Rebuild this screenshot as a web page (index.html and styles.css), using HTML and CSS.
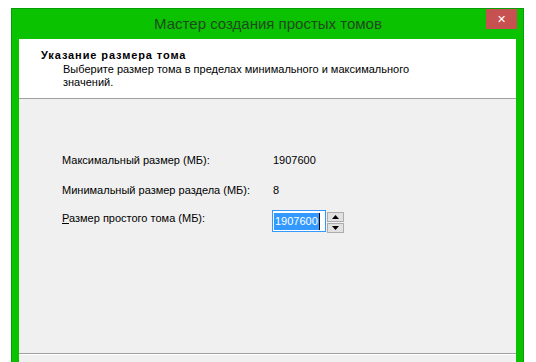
FILE: index.html
```html
<!DOCTYPE html>
<html lang="ru">
<head>
<meta charset="utf-8">
<title>Мастер создания простых томов</title>
<link rel="stylesheet" href="styles.css">
</head>
<body>
<div class="window">
  <div class="titlebar">
    <span class="title">Мастер создания простых томов</span>
    <div class="close">&#x2715;</div>
  </div>
  <div class="client">
    <div class="header">
      <div class="h-title">Указание размера тома</div>
      <div class="h-sub">Выберите размер тома в пределах минимального и максимального<br>значений.</div>
    </div>
    <div class="main">
      <div class="row r1">
        <span class="label">Максимальный размер (МБ):</span>
        <span class="value">1907600</span>
      </div>
      <div class="row r2">
        <span class="label">Минимальный размер раздела (МБ):</span>
        <span class="value">8</span>
      </div>
      <div class="row r3">
        <span class="label"><u>Р</u>азмер простого тома (МБ):</span>
        <div class="spin">
          <div class="edit"><span class="sel">1907600</span><span class="caret"></span></div>
          <div class="btns">
            <div class="btn"><svg width="7" height="4" viewBox="0 0 7 4"><path d="M0 4 L7 4 L3.5 0 Z" fill="#000"/></svg></div>
            <div class="btn"><svg width="7" height="4" viewBox="0 0 7 4"><path d="M0 0 L7 0 L3.5 4 Z" fill="#000"/></svg></div>
          </div>
        </div>
      </div>
    </div>
    <div class="footer"></div>
  </div>
</div>
</body>
</html>
```
FILE: styles.css
```css
html, body {
  margin: 0;
  padding: 0;
  background: #ffffff;
  height: 362px;
  overflow: hidden;
}
body {
  font-family: "Liberation Sans", Arial, sans-serif;
  font-size: 11px;
  color: #000;
}
.window {
  margin: 8px 0 0 11px;
  width: 497px;
  border: 1px solid #089c08;
  border-bottom: none;
  background: #0bc200;
  padding: 0 7px;
  height: 353px;
  position: relative;
}
.titlebar {
  height: 30px;
  display: flex;
  justify-content: center;
  align-items: center;
}
.title {
  font-size: 15px;
  line-height: 30px;
  color: #1f4a20;
  padding-left: 1px;
}
.close {
  position: absolute;
  top: 0;
  right: 6px;
  width: 31px;
  height: 20px;
  background: #c75050;
  color: #fff;
  font-family: "DejaVu Sans", sans-serif;
  font-size: 11px;
  font-weight: bold;
  display: flex;
  align-items: center;
  justify-content: center;
}
.client {
  background: #f0f0f0;
  height: 323px;
}
.header {
  background: #ffffff;
  border-bottom: 1px solid #a0a0a0;
  box-sizing: border-box;
  height: 60px;
  padding: 9px 0 0 22px;
}
.h-title {
  font-weight: bold;
  line-height: 14px;
  letter-spacing: 0.9px;
}
.h-sub {
  margin: 1px 0 0 22px;
  line-height: 13px;
}
.main {
  height: 255px;
  box-sizing: border-box;
  padding: 54px 0 0 43px;
  border-bottom: 1px solid #a0a0a0;
}
.row {
  display: flex;
  line-height: 14px;
}
.label {
  width: 211px;
}
.r2 { margin-top: 16px; }
.r3 { margin-top: 13px; align-items: flex-start; }
.r3 .label { margin-top: 1px; width: 210px; }
.spin {
  display: flex;
  gap: 1px;
}
.edit {
  width: 51px;
  height: 20px;
  border: 1px solid #3399ff;
  background: #fff;
  display: flex;
  align-items: center;
  padding-left: 1px;
}
.sel {
  background: #3399ff;
  color: #fff;
  line-height: 17px;
  height: 17px;
  padding: 0 1px;
}
.caret {
  width: 1px;
  height: 17px;
  background: #000;
}
.btns {
  display: flex;
  flex-direction: column;
  gap: 1px;
  padding-top: 2px;
}
.btn {
  width: 15px;
  height: 8px;
  border: 1px solid #adadad;
  background: #e1e1e1;
  display: flex;
  align-items: center;
  justify-content: center;
}
.footer {
  height: 8px;
  background: #f0f0f0;
  border-top: 1px solid #ffffff;
}
```
